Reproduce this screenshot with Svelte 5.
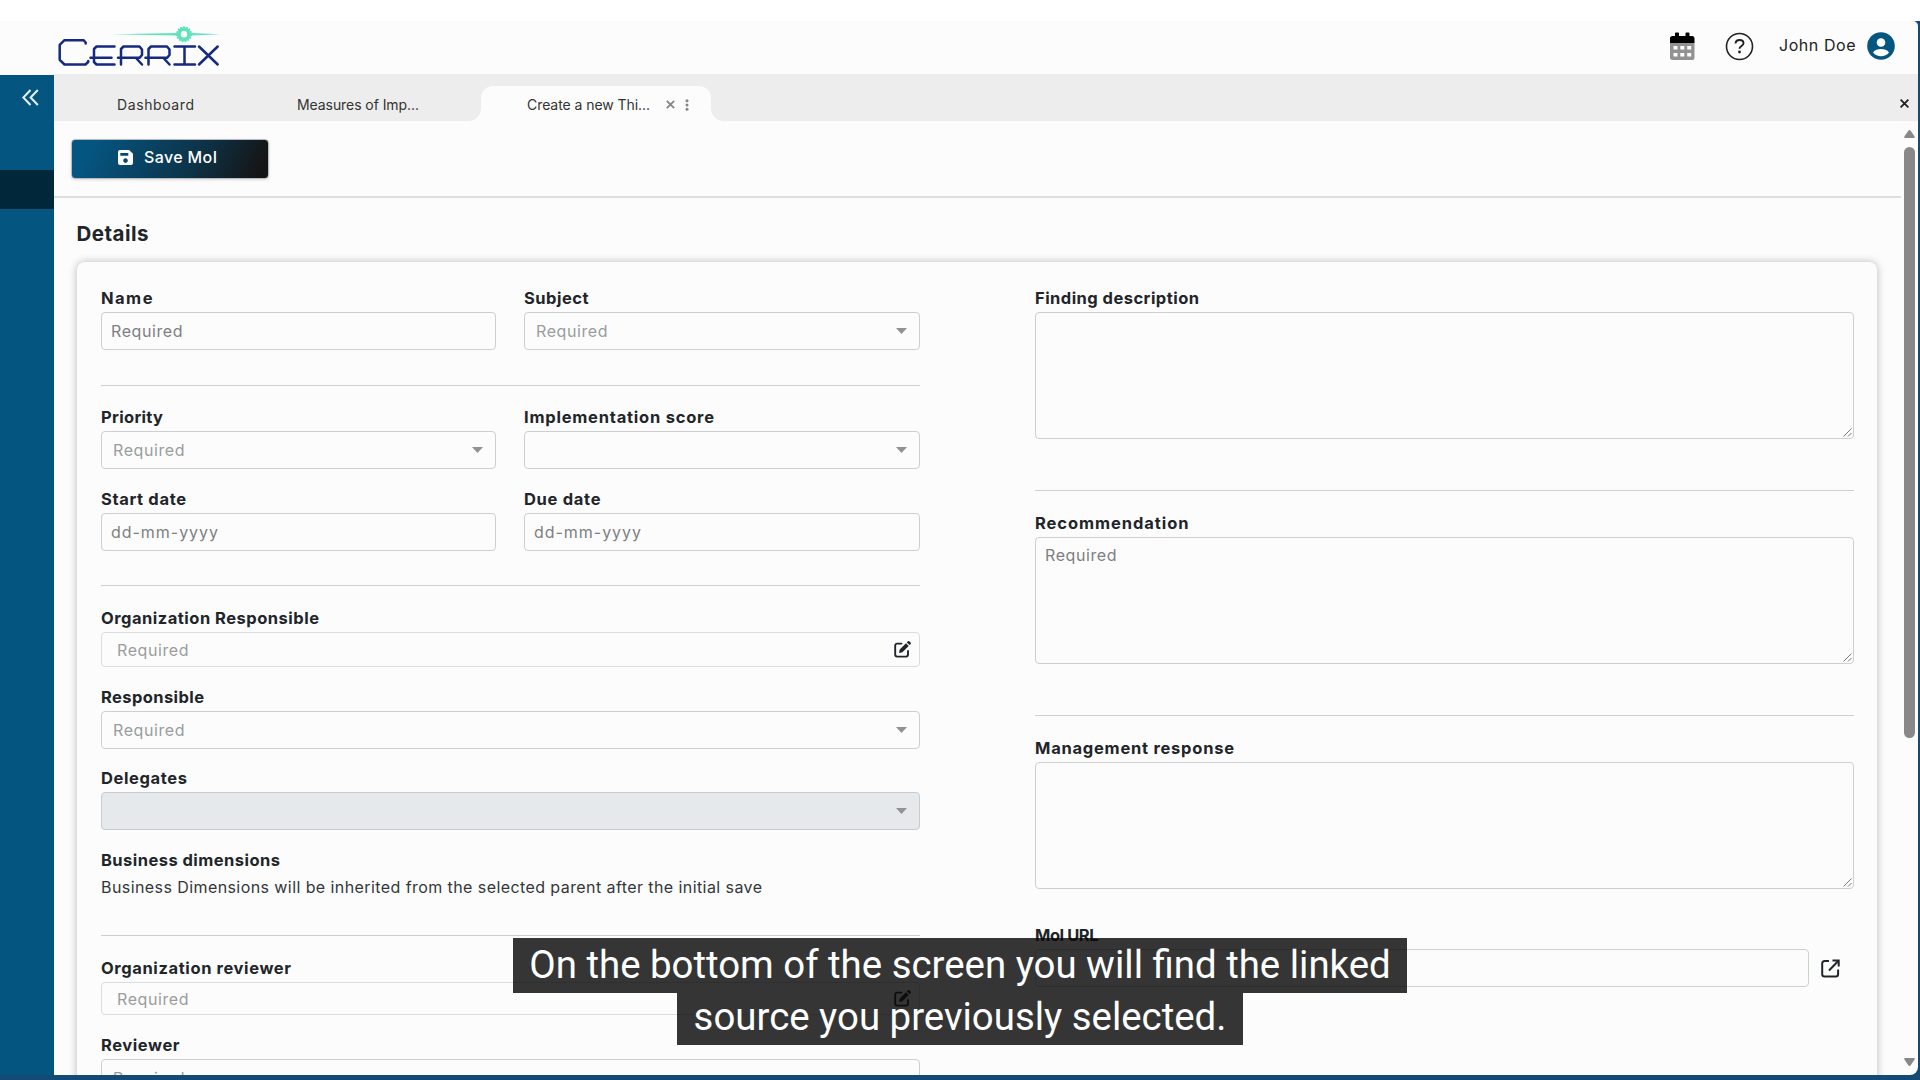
<script>
  const topPair = [
    { label: 'Name', width: 51.5, kind: 'input', text: 'Required' },
    { label: 'Subject', width: 64.5, kind: 'select', text: 'Required' },
  ];
  const schedule = [
    { label: 'Priority', width: 62, kind: 'select', text: 'Required' },
    { label: 'Implementation score', width: 190, kind: 'select', text: '' },
    { label: 'Start date', width: 85, kind: 'input', text: 'dd-mm-yyyy' },
    { label: 'Due date', width: 76.5, kind: 'input', text: 'dd-mm-yyyy' },
  ];
  const owners = [
    { label: 'Organization Responsible', width: 218, kind: 'picker', text: 'Required' },
    { label: 'Responsible', width: 103, kind: 'select', text: 'Required' },
    { label: 'Delegates', width: 86, kind: 'select off', text: '' },
  ];
  const reviewers = [
    { label: 'Organization reviewer', width: 190, kind: 'picker short', text: 'Required' },
    { label: 'Reviewer', width: 78.5, kind: 'select', text: 'Required' },
  ];
  const notes = [
    { label: 'Finding description', width: 164, text: '' },
    { label: 'Recommendation', width: 153.5, text: 'Required' },
    { label: 'Management response', width: 199, text: '' },
  ];
  const teeth = Array.from({ length: 15 }, (_, i) => i * 24);

  // Tracks a run of text so that it fills the given width.
  function fit(node, width) {
    const count = node.textContent.length;
    if (count < 2 || !width) return;
    node.style.letterSpacing = '0px';
    const range = document.createRange();
    range.selectNodeContents(node);
    const natural = range.getBoundingClientRect().width;
    node.style.letterSpacing = `${((width - natural) / (count - 1)).toFixed(3)}px`;
  }
  const hintWidth = (text) => (text === 'Required' ? 71.5 : text ? 107 : 0);
</script>

{#snippet field(f)}
  <div class="field">
    <div class="label"><span use:fit={f.width}>{f.label}</span></div>
    <div class="box {f.kind}">
      <span class="ph" use:fit={hintWidth(f.text)}>{f.text}</span>
      {#if f.kind.startsWith('select')}
        <svg class="caret" width="11" height="6" viewBox="0 0 11 6"><path d="M0 0h11L5.500 6z" fill="#929292" /></svg>
      {:else if f.kind.startsWith('picker')}
        <svg class="edit" width="17" height="17" viewBox="0 0 17 17">
          <path d="M7.500 2.600H3.200A2 2 0 0 0 1.200 4.600V13.600A2 2 0 0 0 3.200 15.600H12A2 2 0 0 0 14 13.600V10" fill="none" stroke="#212529" stroke-width="1.900" stroke-linecap="round" />
          <path d="M5 12l.7-3.500 6.300-6.300 2.700 2.700-6.300 6.300z M12.800 1.400l.9-.9a1.300 1.300 0 0 1 1.900 0l.8.8a1.300 1.300 0 0 1 0 1.900l-.9.9z" fill="#212529" />
        </svg>
      {/if}
    </div>
  </div>
{/snippet}

<div class="screen">
  <div class="app">
    <header>
      <svg class="logo" width="166" height="44" viewBox="0 0 166 44">
        <path d="M54 9.300L119 8.100V10.500zM133 8.100L162.500 9.300 133 10.500z" fill="#5fe3bd" />
        <g fill="#5fe3bd">
          {#each teeth as a}
            <rect x="125.100" y="1.300" width="1.800" height="3" transform="rotate({a} 126 9.300)" />
          {/each}
        </g>
        <circle cx="126" cy="9.300" r="5.100" fill="none" stroke="#5fe3bd" stroke-width="3.800" />
        <g fill="none" stroke="#14297f" stroke-width="2.500" stroke-linecap="round" stroke-linejoin="round">
          <path d="M27.700 18.500V17.500L25.500 15.200H6.500L1.700 19.800V34.800L6.500 39.500H27.500L30.200 37V36" />
          <path d="M56.500 21.500H38.500L36 24V37L38.500 39.500H56.500M32.500 32.800H53.500" />
          <path d="M63 39.500V24L65.500 21.500H81.500L84 24.500V30L81.500 32.800H60M78 33L84 39.500" />
          <path d="M90.500 39.500V24L93 21.500H109L111.500 24.500V30L109 32.800H87.500M105.500 33L111.500 39.500" />
          <path d="M116.500 21.500H137M126.500 21.500V39.500M116.500 39.500H137" />
          <path d="M141 21.500L159.700 39.500M159.700 21.500L141 39.500" />
        </g>
      </svg>
      <div class="tools">
        <svg width="25" height="28" viewBox="0 0 25 28">
          <path d="M0 11H24.500V25.500A2.500 2.500 0 0 1 22 28H2.500A2.500 2.500 0 0 1 0 25.500z" fill="#929292" />
          <path d="M0 11V6.500A2.500 2.500 0 0 1 2.500 4H5V1.500a1 1 0 0 1 1-1H8a1 1 0 0 1 1 1V4H15.500V1.500a1 1 0 0 1 1-1H18.500a1 1 0 0 1 1 1V4H22A2.500 2.500 0 0 1 24.500 6.500V11z" fill="#000" />
          <path d="M3.500 14H7.500V17.500H3.500zM10.300 14H14.300V17.500H10.300zM17.200 14H21.200V17.500H17.200zM3.500 21H7.500V24.500H3.500zM10.300 21H14.300V24.500H10.300zM17.200 21H21.200V24.500H17.200z" fill="#fff" />
        </svg>
        <svg class="help" width="29" height="29" viewBox="0 0 29 29">
          <circle cx="14.500" cy="14.500" r="13" fill="none" stroke="#222" stroke-width="1.600" />
          <path d="M10.500 11.500c.2-2.300 1.800-3.500 4-3.500 2.300 0 4 1.200 4 3.200 0 2.800-4 2.700-4 5.500" fill="none" stroke="#222" stroke-width="1.900" />
          <circle cx="14.500" cy="20" r="1.400" fill="#222" />
        </svg>
        <span class="user" use:fit={76.5}>John Doe</span>
        <svg width="28" height="28" viewBox="0 0 28 28">
          <circle cx="14" cy="14" r="13.800" fill="#055581" />
          <circle cx="14" cy="10.500" r="4.300" fill="#fff" />
          <path d="M6 20.500c1.800-2.600 4.800-3.500 8-3.500s6.200.9 8 3.500c-2 2.500-4.800 3.800-8 3.800s-6-1.300-8-3.800z" fill="#fff" />
        </svg>
      </div>
    </header>

    <div class="body">
      <nav>
        <svg width="17" height="17" viewBox="0 0 17 17"><path d="M8.500 1L1.300 8.500 8.500 16M15.800 1L8.600 8.500 15.800 16" fill="none" stroke="#e6f3fa" stroke-width="2" /></svg>
        <div class="current"></div>
      </nav>

      <main>
        <div class="tabs">
          <div class="tab dash"><span use:fit={77}>Dashboard</span></div>
          <div class="tab meas"><span use:fit={122}>Measures of Imp...</span></div>
          <div class="tab active">
            <div class="title"><span use:fit={123}>Create a new Thi...</span></div>
            <svg class="x" width="9" height="9" viewBox="0 0 9 9"><path d="M.8.8l7.400 7.400M8.200.8L.8 8.200" stroke="#858585" stroke-width="1.800" /></svg>
            <svg width="4" height="12" viewBox="0 0 4 12" fill="#858585"><circle cx="2" cy="1.700" r="1.500" /><circle cx="2" cy="6" r="1.500" /><circle cx="2" cy="10.300" r="1.500" /></svg>
          </div>
          <svg class="closeall" width="9" height="9" viewBox="0 0 9 9"><path d="M.6.600l7.800 7.800M8.400.600L.6 8.400" stroke="#222" stroke-width="1.800" /></svg>
        </div>

        <div class="pane">
          <div class="content">
            <div class="toolbar">
              <button>
                <svg width="15" height="15" viewBox="0 0 15 15">
                  <path fill-rule="evenodd" d="M2 0H11L15 3.800V13a2 2 0 0 1-2 2H2a2 2 0 0 1-2-2V2a2 2 0 0 1 2-2zM2.300 3V5.800H10.300V3zM7.500 8.300a2.300 2.300 0 1 0 .01 0z" fill="#fff" />
                </svg>
                <span use:fit={73}>Save MoI</span>
              </button>
            </div>
            <h1><span use:fit={72}>Details</span></h1>
            <section class="card">
              <div class="left">
                <div class="pair">{#each topPair as f}{@render field(f)}{/each}</div>
                <hr class="h1" />
                <div class="pair">{#each schedule as f}{@render field(f)}{/each}</div>
                <hr class="h2" />
                <div class="stack">
                  {#each owners as f}{@render field(f)}{/each}
                  <div class="dims">
                    <div class="label"><span use:fit={179}>Business dimensions</span></div>
                    <p><span use:fit={661}>Business Dimensions will be inherited from the selected parent after the initial save</span></p>
                  </div>
                </div>
                <hr class="h3" />
                <div class="stack">
                  {#each reviewers as f}{@render field(f)}{/each}
                </div>
              </div>

              <div class="right">
                {#each notes as n, i}
                  <div class="field">
                    <div class="label"><span use:fit={n.width}>{n.label}</span></div>
                    <div class="area">
                      <span class="ph" use:fit={hintWidth(n.text)}>{n.text}</span>
                      <svg width="9" height="9" viewBox="0 0 9 9"><path d="M.5 8.500l8-8M5 8.500L8.500 5" stroke="#777" stroke-width="1" /></svg>
                    </div>
                  </div>
                  {#if i < 2}<hr />{/if}
                {/each}
                <div class="field url">
                  <div class="label"><span use:fit={63.5}>MoI URL</span></div>
                  <div class="urlrow">
                    <div class="box input"></div>
                    <svg width="19" height="19" viewBox="0 0 19 19" fill="none" stroke="#212529" stroke-width="2">
                      <path d="M8 2H3.500A2.300 2.300 0 0 0 1.200 4.300V15.200A2.300 2.300 0 0 0 3.500 17.500H14.800A2.300 2.300 0 0 0 17.100 15.200V10.500" />
                      <path d="M8 11.500L17 2.200" /><path d="M11.500 1.500H17.700V7.500" />
                    </svg>
                  </div>
                </div>
              </div>
            </section>
          </div>
          <div class="scroll">
            <svg width="11" height="8" viewBox="0 0 11 8"><path d="M5.500 0q.7 0 1.200.8L10.600 6.500Q11.200 8 10 8H1Q-.2 8 .4 6.500L4.300.8Q4.800 0 5.500 0z" fill="#888" /></svg>
            <div class="thumb"></div>
            <svg class="down" width="11" height="8" viewBox="0 0 11 8"><path d="M5.500 8q.7 0 1.200-.8L10.600 1.500Q11.200 0 10 0H1Q-.2 0 .4 1.500L4.300 7.200Q4.800 8 5.500 8z" fill="#888" /></svg>
          </div>
        </div>
      </main>
    </div>
  </div>

  <div class="caption">
    <div class="line one"><span>On the bottom of the screen you will find the linked</span></div>
    <div class="line two"><span>source you previously selected.</span></div>
  </div>
</div>

<style>
  :global(body) { margin: 0; overflow: hidden; }
  * { box-sizing: border-box; }
  svg { display: block; flex: none; }
  .screen { position: relative; width: 1920px; height: 1080px; padding: 21px 2px 5px 0; overflow: hidden; font-family: Inter, "Open Sans", sans-serif; color: #212529; background: linear-gradient(#fff 21px, #134a76 21px); }
  .app { display: flex; flex-direction: column; height: 1054px; background: #fcfcfc; border-radius: 0 5px 8px 0; overflow: hidden; }
  header { display: flex; justify-content: space-between; align-items: flex-start; height: 54px; padding: 4px 23px 0 58px; flex: none; }
  .tools { display: flex; align-items: center; height: 42px; }
  .help { margin-left: 30px; }
  .user { margin: 0 10px 0 25px; width: 78px; font-size: 16px; color: #222; white-space: nowrap; line-height: 24px; padding-bottom: 2px; }
  .body { display: flex; flex: 1; min-height: 0; }
  nav { width: 54px; background: #055581; flex: none; padding-top: 14px; }
  nav svg { margin-left: 22px; }
  .current { height: 39px; margin-top: 64px; background: #01273a; }
  main { flex: 1; display: flex; flex-direction: column; min-width: 0; }
  .tabs { display: flex; align-items: flex-end; height: 47px; margin-top: -1px; background: #ededed; flex: none; }
  .tab { display: flex; align-items: center; height: 35px; font-size: 14px; color: #333; white-space: nowrap; padding-top: 2px; }
  .dash { width: 181px; padding-left: 63px; }
  .meas { width: 246px; padding-left: 62px; }
  .active { position: relative; width: 230px; background: #fcfcfc; border-radius: 12px 12px 0 0; padding-left: 46px; }
  .title { width: 124px; }
  .active .x { margin: 0 10px 0 15px; }
  .active::before, .active::after { content: ''; position: absolute; bottom: 0; width: 12px; height: 12px; }
  .active::before { left: -12px; background: radial-gradient(circle at 0 0, #ededed 11.5px, #fcfcfc 12px); }
  .active::after { right: -12px; background: radial-gradient(circle at 100% 0, #ededed 11.5px, #fcfcfc 12px); }
  .closeall { margin: 0 9px 13px auto; }
  .pane { display: flex; flex: 1; min-height: 0; }
  .content { width: 1847px; overflow: hidden; }
  .toolbar { height: 77px; padding: 18px 0 0 17px; border-bottom: 2px solid #dedede; }
  button { display: flex; align-items: center; width: 198px; height: 40px; padding: 0 0 4px 46px; border: 1px solid #b5bcc0; border-radius: 4px; background: linear-gradient(115deg, #055581 10%, #0d3348 62%, #151515 95%); color: #fff; font: 500 16px Inter, sans-serif; box-shadow: 0 1px 3px #0002; }
  button span { margin-left: 11px; white-space: nowrap; }
  h1 { margin: 21px 0 0 22.5px; font-size: 20.5px; line-height: 30px; font-weight: 700; }
  .card { display: flex; gap: 115px; width: 1800px; height: 860px; margin: 13px 0 0 23px; padding: 24px 24px 0 24px; border-radius: 8px; box-shadow: 0 0 9px #0004; }
  .left { width: 819px; flex: none; }
  .right { width: 819px; flex: none; }
  .pair { display: grid; grid-template-columns: 395px 396px; column-gap: 28px; row-gap: 18px; }
  .label { height: 26px; line-height: 24px; font-size: 16.5px; font-weight: 700; white-space: nowrap; }
  .box { display: flex; align-items: center; justify-content: space-between; height: 38px; border: 1px solid #cdcfd0; border-radius: 4px; }
  .ph { font-size: 16px; line-height: 24px; color: #7c8082; white-space: nowrap; }
  .input { padding-left: 9px; }
  .select { padding: 0 12px 0 11px; }
  .select .ph, .picker .ph { color: #9a9d9e; }
  .picker { height: 35px; padding: 0 8px 0 15px; border-color: #dadcdd; }
  .picker.short { height: 33px; }
  .off { background: #e6e9eb; border-color: #c9cccf; }
  hr { height: 1px; margin: 0; border: 0; background: #cfcfcf; }
  .h1 { margin: 34.500px 0 19.500px; }
  .h2 { margin: 34px 0 20px; }
  .h3 { margin: 0 0 20px; }
  .stack { display: grid; row-gap: 17.500px; }
  .dims { height: 87.500px; }
  .dims p { margin: 0; font-size: 16px; line-height: 26px; font-weight: 400; color: #33373a; white-space: nowrap; }
  .area { position: relative; height: 127px; border: 1px solid #cdcfd0; border-radius: 4px; padding: 5px 9px; }
  .area svg { position: absolute; right: 1px; bottom: 1px; }
  .right hr { margin: 51px 0 20px; }
  .url { margin-top: 34px; }
  .urlrow { display: flex; align-items: center; gap: 12px; }
  .urlrow .box { width: 774px; }
  .scroll { flex: 1; padding: 9px 3px 0; display: flex; flex-direction: column; align-items: center; }
  .thumb { width: 11px; height: 591px; margin: 9px 0 320px; border-radius: 6px; background: #888; flex: none; }
  .caption { position: absolute; left: 513px; top: 938px; width: 894px; display: flex; flex-direction: column; align-items: center; font: 400 38.4px Roboto, sans-serif; color: #fff; }
  .line { background: rgba(8, 8, 8, 0.82); white-space: nowrap; display: flex; justify-content: center; }
  .one { width: 894px; height: 55px; line-height: 54px; }
  .two { width: 566px; height: 52px; line-height: 48px; }
</style>
